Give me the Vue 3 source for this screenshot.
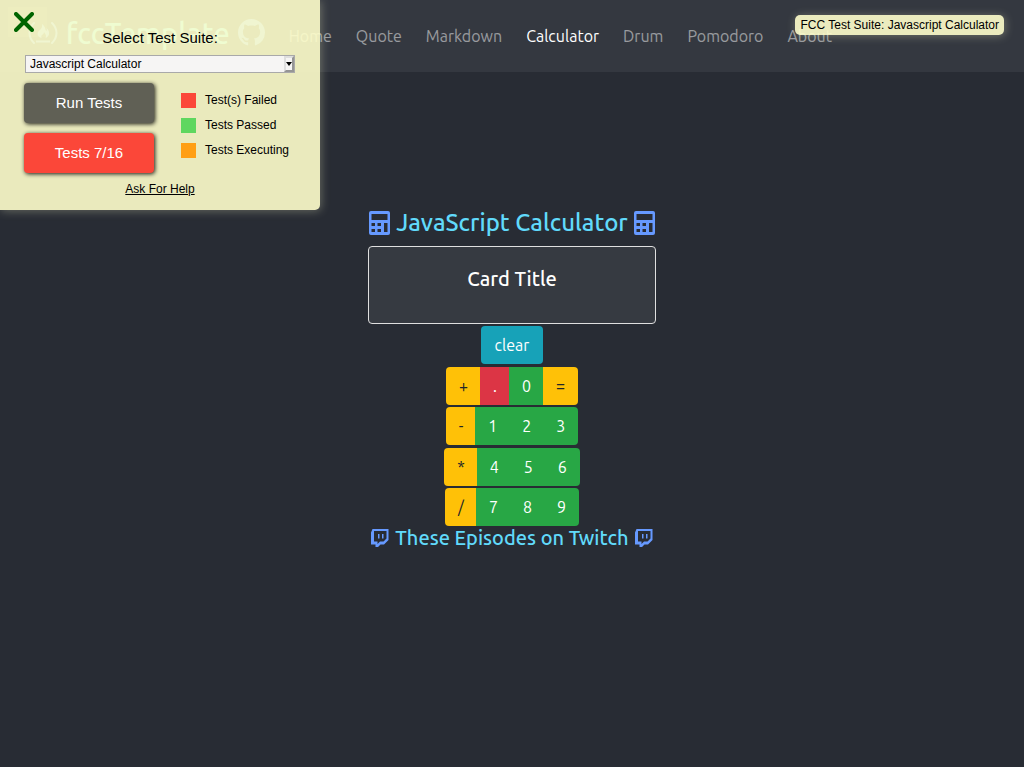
<script setup>
import { ref } from 'vue'

const links = ['Home', 'Quote', 'Markdown', 'Calculator', 'Drum', 'Pomodoro', 'About']
const active = ref('Calculator')
const suite = ref('Javascript Calculator')
const rows = [
  ['+', '.', '0', '='],
  ['-', '1', '2', '3'],
  ['*', '4', '5', '6'],
  ['/', '7', '8', '9'],
]
const legend = [
  { kind: 'failed', text: 'Test(s) Failed' },
  { kind: 'passed', text: 'Tests Passed' },
  { kind: 'executing', text: 'Tests Executing' },
]
const kind = (key) => (key === '.' ? 'danger' : /\d/.test(key) ? 'success' : 'warning')
</script>

<template>
  <div class="page">
    <nav class="navbar">
      <a class="brand" href="#">
        <svg class="brand-camp" viewBox="0 0 30 24" aria-hidden="true">
          <path d="M6 2C0 8 0 16 6 22M24 2C30 8 30 16 24 22" fill="none" stroke="currentColor" stroke-width="2" stroke-linecap="round" />
          <path d="M14 3C18 6 17 9 18.500 10C19 9 19 8 18.500 7C23 11 21 16 17.500 17C19 14 17 13 16 11C16 14 12.500 13 13.500 17C8 15 9 11 12 9C14 7 14.500 5 14 3Z" fill="currentColor" />
          <path d="M8 20.500H22" stroke="currentColor" stroke-width="2" />
        </svg>
        <span>fccTemplate</span>
        <svg class="brand-github" viewBox="0 0 16 16" aria-hidden="true">
          <path fill="currentColor" d="M8 0C3.580 0 0 3.580 0 8c0 3.540 2.290 6.530 5.470 7.590.4.070.55-.17.55-.38 0-.19-.01-.82-.01-1.490-2.010.37-2.530-.49-2.690-.94-.09-.23-.48-.94-.82-1.130-.28-.15-.68-.52-.01-.53.63-.01 1.080.58 1.230.82.72 1.210 1.870.87 2.330.66.07-.52.28-.87.51-1.070-1.780-.2-3.640-.89-3.640-3.950 0-.87.31-1.590.82-2.150-.08-.2-.36-1.020.08-2.120 0 0 .67-.21 2.200.82.64-.18 1.320-.27 2-.27s1.360.09 2 .27c1.530-1.040 2.200-.82 2.200-.82.44 1.100.16 1.920.08 2.120.51.56.82 1.270.82 2.150 0 3.070-1.870 3.750-3.650 3.950.29.25.54.73.54 1.480 0 1.070-.01 1.930-.01 2.200 0 .21.15.46.55.38A8.010 8.010 0 0 0 16 8c0-4.420-3.580-8-8-8z" />
        </svg>
      </a>
      <a v-for="link in links" :key="link" href="#" class="nav-link" :class="{ active: link === active }" @click.prevent="active = link">{{ link }}</a>
    </nav>

    <main class="content">
      <h1 class="title">
        <svg class="calc-icon" viewBox="0 0 21 24" aria-hidden="true"><use href="#calc" /></svg>
        <span>JavaScript Calculator</span>
        <svg class="calc-icon" viewBox="0 0 21 24" aria-hidden="true"><use href="#calc" /></svg>
      </h1>
      <section class="card"><h2>Card Title</h2></section>
      <div class="keypad">
        <button type="button" class="key info">clear</button>
        <div v-for="(row, i) in rows" :key="i" class="key-row">
          <button v-for="key in row" :key="key" type="button" class="key" :class="kind(key)">{{ key }}</button>
        </div>
      </div>
      <h3 class="episodes">
        <svg class="twitch-icon" viewBox="0 0 18 18" aria-hidden="true"><use href="#twitch" /></svg>
        <a href="#">These Episodes on Twitch</a>
        <svg class="twitch-icon" viewBox="0 0 18 18" aria-hidden="true"><use href="#twitch" /></svg>
      </h3>
    </main>

    <svg class="symbols" aria-hidden="true">
      <symbol id="calc" viewBox="0 0 21 24">
        <path fill="currentColor" fill-rule="evenodd" d="M2 0H19Q21 0 21 2V22Q21 24 19 24H2Q0 24 0 22V2Q0 0 2 0ZM2.500 3V9H18.500V3ZM2.500 12V15H6V12ZM8.500 12V15H12V12ZM15 12V21H18.500V12ZM2.500 18V21H6V18ZM8.500 18V21H12V18Z" />
      </symbol>
      <symbol id="twitch" viewBox="0 0 18 18">
        <path fill="currentColor" fill-rule="evenodd" d="M1.500 0H17.500V11L13 15.500H9.500L7 18H4.500V15.500H0V3.500ZM3 2V12.500H6.500V15L9 12.500H12.500L15.500 9.500V2ZM7 5H8.500V9.500H7ZM11 5H12.500V9.500H11Z" />
      </symbol>
    </svg>

    <aside class="panel">
      <button type="button" class="close" aria-label="Close">
        <svg viewBox="0 0 20 20" aria-hidden="true"><path d="M2 2L18 18M18 2L2 18" stroke="currentColor" stroke-width="4" stroke-linecap="round" /></svg>
      </button>
      <label class="suite-label" for="suite">Select Test Suite:</label>
      <div class="select-wrap">
        <select id="suite" v-model="suite"><option>Javascript Calculator</option></select>
        <span class="select-arrow"></span>
      </div>
      <div class="panel-body">
        <div class="actions">
          <button type="button" class="action run">Run Tests</button>
          <button type="button" class="action result">Tests 7/16</button>
        </div>
        <ul class="legend">
          <li v-for="item in legend" :key="item.kind"><span class="swatch" :class="item.kind"></span>{{ item.text }}</li>
        </ul>
      </div>
      <a class="help" href="#">Ask For Help</a>
    </aside>
    <div class="suite-badge">FCC Test Suite: Javascript Calculator</div>
  </div>
</template>

<style>
body {
  margin: 0;
  background: #282c34;
}
</style>

<style scoped>
* {
  box-sizing: border-box;
}
.page {
  position: relative;
  min-height: 100vh;
  background: #282c34;
  color: #fff;
  font-family: Ubuntu, "Noto Sans", sans-serif;
  font-size: 16px;
  line-height: 24px;
}
.navbar {
  display: flex;
  align-items: center;
  gap: 24px;
  height: 72px;
  padding: 0 28px;
  background: #343840;
}
.brand {
  display: flex;
  align-items: center;
  gap: 8px;
  color: #61dafb;
  font-size: 29px;
  font-weight: 500;
  text-decoration: none;
}
.brand svg {
  color: #6699ff;
}
.brand-camp {
  width: 30px;
  height: 24px;
}
.brand-github {
  width: 27px;
  height: 27px;
  margin-bottom: 8px;
}
.brand span,
.brand-camp {
  margin-bottom: 6px;
}
.nav-link {
  color: rgba(255, 255, 255, 0.5);
  text-decoration: none;
}
.nav-link.active {
  color: #fff;
}
.content {
  display: flex;
  flex-direction: column;
  align-items: center;
  padding-top: 136px;
}
.title,
.episodes {
  display: flex;
  align-items: center;
  gap: 6px;
  margin: 0;
  color: #61dafb;
  font-weight: 500;
}
.title {
  height: 30px;
  margin-bottom: 8px;
  font-size: 24px;
}
.episodes {
  font-size: 20px;
}
.episodes a {
  color: inherit;
  text-decoration: none;
}
.calc-icon {
  width: 21px;
  height: 24px;
  color: #6699ff;
}
.twitch-icon {
  width: 18px;
  height: 18px;
  color: #6699ff;
}
.symbols {
  display: none;
}
.card {
  width: 288px;
  margin-bottom: 2px;
  padding: 20px 20px 32px;
  border: 1px solid #dfdfdf;
  border-radius: 4px;
  background: #363a41;
  text-align: center;
}
.card h2 {
  margin: 0;
  font-size: 20px;
  font-weight: 500;
  line-height: 24px;
}
.keypad {
  display: flex;
  flex-direction: column;
  align-items: center;
  justify-content: space-between;
  min-height: 200px;
}
.key-row {
  display: flex;
  border-radius: 4px;
  overflow: hidden;
}
.key {
  height: 38px;
  padding: 0 13px;
  border: 0;
  color: #fff;
  font: inherit;
}
.key + .key {
  margin-left: -1px;
}
.info {
  padding: 0 14px;
  border-radius: 4px;
  background: #17a2b8;
}
.danger {
  background: #dc3545;
}
.success {
  background: #28a745;
}
.warning {
  background: #ffc107;
  color: #212529;
}
.panel {
  position: absolute;
  top: 0;
  left: 0;
  width: 320px;
  height: 210px;
  padding: 29px 24px 0;
  border-radius: 0 0 5px 0;
  background: rgba(255, 255, 204, 0.9);
  box-shadow: 1px 1px 10px rgba(255, 255, 204, 0.3);
  color: #000;
  font-family: "Liberation Sans", Arial, sans-serif;
  font-size: 12px;
  line-height: 14px;
  text-align: center;
}
.close {
  position: absolute;
  top: 7px;
  left: 8px;
  width: 39px;
  height: 30px;
  padding: 0 6px;
  border: 0;
  background: rgba(255, 255, 204, 0.1);
  color: #006400;
  text-align: left;
}
.close svg {
  display: block;
  width: 20px;
  height: 20px;
}
.suite-label {
  display: block;
  margin-bottom: 8px;
  font-size: 15px;
  line-height: 18px;
}
.select-wrap {
  position: relative;
  width: 270px;
  height: 18px;
  margin-left: 1px;
}
select {
  display: block;
  width: 100%;
  height: 100%;
  padding: 0 4px;
  border: 1px solid #a9a9a9;
  border-radius: 0;
  background: #f6f5f4;
  color: #000;
  font: inherit;
  appearance: none;
}
.select-arrow {
  position: absolute;
  top: 1px;
  right: 1px;
  display: grid;
  place-items: center;
  width: 10px;
  height: 16px;
  border: 2px solid;
  border-color: #dedede #959595 #959595 #dedede;
  background: #f6f5f4;
  pointer-events: none;
}
.select-arrow::before {
  content: "";
  border: 3px solid transparent;
  border-top: 4px solid #000;
  border-bottom: 0;
}
.panel-body {
  display: flex;
  gap: 27px;
  margin-top: 10px;
}
.actions {
  display: grid;
  gap: 10px;
  width: 130px;
}
.action {
  height: 40px;
  padding: 0;
  border: 0;
  border-radius: 4px;
  box-shadow: 1px 1px 4px rgba(0, 0, 0, 0.9);
  color: #fff;
  font: inherit;
  font-size: 15px;
}
.run {
  background: #606055;
}
.result {
  background: #fb4739;
}
.legend {
  display: grid;
  gap: 10px;
  align-content: start;
  margin: 0;
  padding: 10px 0 0;
  list-style: none;
}
.legend li {
  display: flex;
  gap: 9px;
  height: 15px;
}
.swatch {
  width: 15px;
  height: 15px;
}
.failed {
  background: #fb4739;
}
.passed {
  background: #5fd75f;
}
.executing {
  background: #ff9f14;
}
.help {
  display: inline-block;
  margin-top: 9px;
  color: #000;
}
.suite-badge {
  position: absolute;
  top: 15px;
  right: 20px;
  padding: 3px 5px;
  border-radius: 5px;
  background: rgba(255, 255, 204, 0.9);
  box-shadow: 1px 1px 10px rgba(255, 255, 204, 0.3);
  color: #000;
  font-family: "Liberation Sans", Arial, sans-serif;
  font-size: 12px;
  line-height: 14px;
}
</style>
